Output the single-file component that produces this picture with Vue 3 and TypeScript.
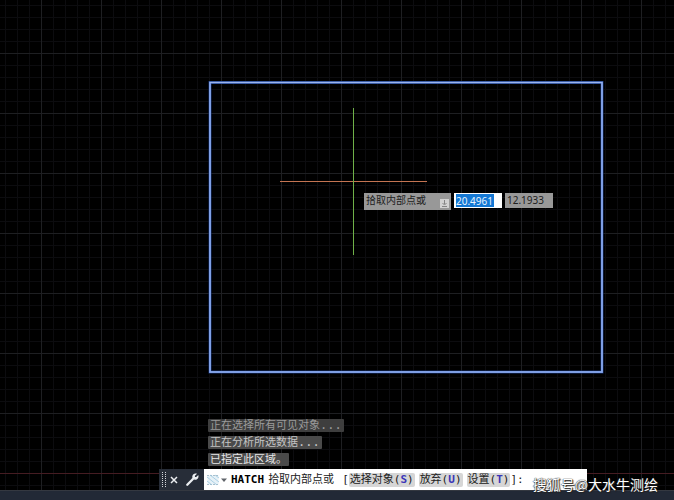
<script setup lang="ts">
import { ref } from 'vue'

interface HistoryLine {
  text: string
  dots: string
  tone: string
}

interface Option {
  label: string
  key: string
}

const history: HistoryLine[] = [
  { text: '正在选择所有可见对象', dots: '...', tone: 'old' },
  { text: '正在分析所选数据', dots: '...', tone: 'mid' },
  { text: '已指定此区域。', dots: '', tone: 'new' },
]

const options: Option[] = [
  { label: '选择对象', key: 'S' },
  { label: '放弃', key: 'U' },
  { label: '设置', key: 'T' },
]

const x = ref('20.4961')
const y = ref('12.1933')
const command = ref('')
</script>

<template>
  <main class="app">
    <section class="canvas">
      <svg class="scene" width="100%" height="100%" aria-hidden="true">
        <defs>
          <pattern id="minor" x="41" y="53" width="12" height="12" patternUnits="userSpaceOnUse">
            <path d="M0 0.5H12M0.5 0V12" stroke="#0c0c0f" />
          </pattern>
          <pattern id="major" x="41" y="53" width="60" height="60" patternUnits="userSpaceOnUse">
            <path d="M0 0.5H60M0.5 0V60" stroke="#1e1f22" />
          </pattern>
        </defs>
        <rect width="100%" height="100%" fill="url(#minor)" />
        <rect width="100%" height="100%" fill="url(#major)" />
        <rect y="473" width="100%" height="1" fill="#451c22" />
        <rect x="210" y="82.5" width="392" height="289.5" fill="none" stroke="#16306f" stroke-width="3" />
        <rect x="210" y="82.5" width="392" height="289.5" fill="none" stroke="#6389dc" stroke-width="2" />
        <rect x="210" y="82.5" width="392" height="289.5" fill="none" stroke="#9ab4ee" stroke-width="1" />
        <rect x="280" y="181" width="147" height="1" fill="#c47452" />
        <rect x="353" y="108" width="1" height="147" fill="#6fb048" />
      </svg>

      <div class="dynamic">
        <label class="prompt" for="coord-x">
          <span>拾取内部点或</span>
          <svg class="more" viewBox="0 0 9 9" aria-hidden="true">
            <rect width="9" height="9" fill="#d2d2d2" />
            <path d="M4.5 1V5M2.5 4L4.5 6L6.5 4M2 7.5H7" fill="none" stroke="#858585" />
          </svg>
        </label>
        <input id="coord-x" v-model="x" class="coord active" type="text" />
        <input v-model="y" class="coord" type="text" aria-label="Y" />
      </div>

      <div class="dock">
        <ul class="history">
          <li v-for="line in history" :key="line.text" :class="line.tone">
            {{ line.text }}<span v-if="line.dots" class="dots">{{ line.dots }}</span>
          </li>
        </ul>
        <form class="commandline" @submit.prevent>
          <div class="tools">
            <svg class="grip" viewBox="0 0 4 15" aria-hidden="true">
              <path d="M0.5 0V15M3.5 0V15" stroke="#d4d6da" stroke-dasharray="1 1" />
            </svg>
            <button type="button" aria-label="关闭">
              <svg width="8" height="8" viewBox="0 0 8 8">
                <path d="M1 1L7 7M7 1L1 7" stroke="#eceef1" stroke-width="1.5" />
              </svg>
            </button>
            <button type="button" aria-label="自定义">
              <svg width="13" height="13" viewBox="0 0 13 13">
                <path d="M1.3 11.7L7.2 5.8" stroke="#eceef1" stroke-width="2.3" stroke-linecap="round" />
                <path
                  d="M11 0.7L8.9 2.8L9 4L10.2 4.1L12.3 2C12.9 3.8 12.3 5.4 11 6.2C9.7 7 8.2 6.8 7.1 5.9C6.1 4.8 6 3.2 6.8 2C7.7 .7 9.3 .2 11 .7Z"
                  fill="#eceef1"
                />
              </svg>
            </button>
          </div>
          <div class="entry">
            <button class="recent" type="button" aria-label="最近使用的命令">
              <svg width="21" height="12" viewBox="0 0 21 12">
                <rect x="0.5" y="1.5" width="11" height="9" fill="#e6f1f7" />
                <path d="M0 1.5H12M0 10.5H12" fill="none" stroke="#a9bfcc" stroke-dasharray="2 1" />
                <path d="M0 3L10 11M0 7L5 11M3 1L12 8M8 1L12 4" stroke="#9cc8e0" stroke-width=".8" />
                <path d="M14 4.5H20L17 8Z" fill="#60646a" />
              </svg>
            </button>
            <strong>HATCH</strong>
            <span class="ask">拾取内部点或</span>
            <span class="options">
              <span>[</span>
              <button v-for="option in options" :key="option.key" class="option" type="button">{{ option.label }}(<b>{{ option.key }}</b>)</button>
              <span>]:</span>
            </span>
            <input v-model="command" class="typed" type="text" aria-label="命令" />
          </div>
        </form>
      </div>
    </section>
    <footer class="status"></footer>
    <div class="watermark">搜狐号@大水牛测绘</div>
  </main>
</template>

<style>
body {
  margin: 0;
  background: #000;
}
</style>

<style scoped>
.app {
  position: relative;
  display: flex;
  flex-direction: column;
  min-height: 100vh;
  background: #000;
  font-family: "DejaVu Sans Mono", "Noto Sans CJK SC", monospace;
  font-size: 11px;
}

.canvas {
  position: relative;
  display: flex;
  flex: 1;
  flex-direction: column;
  justify-content: flex-end;
}

.scene {
  position: absolute;
  inset: 0;
}

button,
input {
  box-sizing: border-box;
  margin: 0;
  padding: 0;
  border: 0;
  background: none;
  font: inherit;
  color: inherit;
}

.dynamic {
  position: absolute;
  left: 364px;
  top: 193px;
  display: flex;
  align-items: flex-start;
  gap: 3px;
  font-family: "Noto Sans", "Noto Sans CJK SC", sans-serif;
  font-size: 10px;
  color: #202020;
}

.prompt {
  display: flex;
  box-sizing: border-box;
  align-items: flex-start;
  justify-content: space-between;
  width: 87px;
  height: 17px;
  padding: 0 2px;
  background: #989898;
  line-height: 14px;
}

.more {
  width: 9px;
  height: 9px;
  align-self: flex-end;
  padding-bottom: 2px;
}

.coord {
  width: 48px;
  height: 15px;
  padding: 0 2px;
  background: #989898;
  line-height: 15px;
}

.coord.active {
  border: 1px solid #fff;
  padding: 0 1px;
  background: linear-gradient(#1478d4, #1478d4) 1px 0 / 38px 100% no-repeat #fff;
  line-height: 13px;
  color: #e8f3ff;
}

.dock {
  position: relative;
  width: 64%;
  max-width: 428px;
  margin-left: 159px;
}

.history {
  display: flex;
  flex-direction: column;
  align-items: flex-start;
  gap: 4px;
  margin: 0 0 3px 49px;
  padding: 0;
  list-style: none;
}

.history li {
  height: 13px;
  padding: 0 2px;
  border-radius: 1px;
  background: #4a4a4a;
  line-height: 13px;
  white-space: nowrap;
  color: #e6e6e6;
}

.history .old {
  background: #3e3e3e;
  color: #9a9a9a;
}

.history .mid {
  color: #c4c4c4;
}

.dots {
  font-size: 12px;
}

.commandline {
  display: flex;
  height: 21px;
  background: #272d38;
}

.tools {
  display: flex;
  flex: none;
  box-sizing: border-box;
  align-items: center;
  gap: 4px;
  width: 45px;
  padding-left: 3px;
}

.tools button,
.recent {
  display: flex;
}

.grip {
  width: 4px;
  height: 15px;
}

.tools button:last-child {
  margin-left: 4px;
}

.entry {
  display: flex;
  flex: 1;
  align-items: center;
  min-width: 0;
  padding-left: 3px;
  background: #fff;
  line-height: 14px;
  white-space: nowrap;
  color: #202020;
}

.entry strong {
  margin-left: 3px;
  color: #000;
}

.ask {
  margin: 0 8px 0 4px;
}

.options {
  display: flex;
  align-items: center;
}

.option {
  height: 14px;
  margin-right: 4px;
  padding: 0 1px;
  border-radius: 2px;
  background: #d6d6d6;
}

.option:nth-last-child(2) {
  margin-right: 0;
}

.option b {
  color: #3a35b8;
}

.typed {
  flex: 1;
  min-width: 0;
  outline: 0;
}

.status {
  position: relative;
  box-sizing: border-box;
  height: 10px;
  border-top: 1px solid #343840;
  background: #222936;
}

.watermark {
  position: absolute;
  right: 16px;
  bottom: 6px;
  font-family: "Noto Sans CJK SC", sans-serif;
  font-size: 14px;
  line-height: 20px;
  color: #fff;
  text-shadow: 1px 1px 1px #222, 0 0 1px #222, 0 0 1px #222;
}
</style>
